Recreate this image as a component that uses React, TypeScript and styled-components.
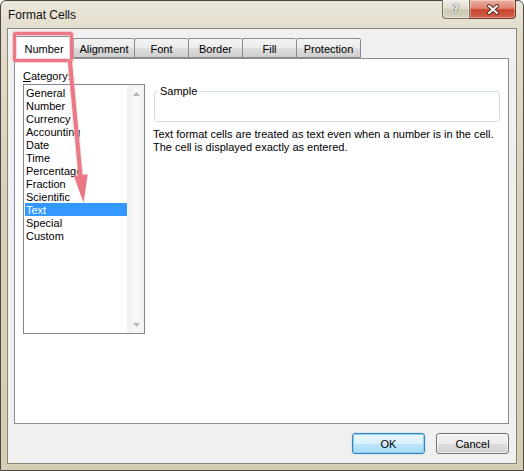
import React from 'react';
import styled, { createGlobalStyle } from 'styled-components';

const GlobalStyle = createGlobalStyle`
  html, body {
    margin: 0;
    padding: 0;
    background: #ffffff;
  }
  body {
    font-family: "Liberation Sans", Arial, sans-serif;
    font-size: 11px;
    color: #000;
  }
  * { box-sizing: border-box; }
`;

const Window = styled.div`
  position: relative;
  width: 524px;
  height: 471px;
  border: 1px solid #4a4840;
  border-radius: 6px 6px 0 0;
  background: linear-gradient(180deg, #ebe7da 0px, #e2dccb 30px, #d9d1bb 200px, #d6cdb5 100%);
  padding: 0 6px 6px 6px;
  display: flex;
  flex-direction: column;
`;

const TitleBar = styled.div`
  height: 27px;
  display: flex;
  align-items: flex-start;
  padding-left: 1px;
`;

const Title = styled.div`
  font-size: 12px;
  line-height: 28px;
  color: #111;
`;

const CaptionButtons = styled.div`
  margin-left: auto;
  margin-right: 1px;
  display: flex;
`;

const CaptionButton = styled.div<{ $close?: boolean }>`
  height: 19px;
  width: ${({ $close }) => ($close ? '46px' : '28px')};
  margin-top: -1px;
  display: flex;
  align-items: center;
  justify-content: center;
  border: 1px solid ${({ $close }) => ($close ? '#6b3a2f' : '#77725f')};
  border-top: none;
  border-left: ${({ $close }) => ($close ? 'none' : '1px solid #77725f')};
  border-radius: ${({ $close }) => ($close ? '0 0 4px 0' : '0 0 0 4px')};
  background: ${({ $close }) =>
    $close
      ? 'linear-gradient(180deg, #eab1a2 0%, #de8672 45%, #c9452e 55%, #d2624a 100%)'
      : 'linear-gradient(180deg, #f1eee6 0%, #e1dccf 45%, #cfc8b5 55%, #d8d2c2 100%)'};
  box-shadow: inset 0 0 0 1px rgba(255, 255, 255, 0.35);
`;

const HelpGlyph = styled.span`
  font-family: "DejaVu Sans", sans-serif;
  font-weight: bold;
  font-size: 12px;
  color: #f4f4f4;
  text-shadow: 0 0 1px #5a5a5a, 0 0 1px #5a5a5a, 0 0 1px #5a5a5a;
  line-height: 1;
`;

const Client = styled.div`
  flex: 1;
  background: #f0f0f0;
  border: 1px solid #8c8677;
  padding: 7px 7px 0 6px;
  display: flex;
  flex-direction: column;
`;

const TabRow = styled.div`
  height: 23px;
  margin-bottom: -1px;
  padding-left: 3px;
  display: flex;
  align-items: flex-end;
  position: relative;
  z-index: 1;
`;

const Tab = styled.div<{ $active?: boolean; $w: number; $last?: boolean }>`
  width: ${({ $w, $active }) => ($active ? $w + 2 : $w)}px;
  height: ${({ $active }) => ($active ? '23px' : '20px')};
  margin-bottom: ${({ $active }) => ($active ? '0' : '1px')};
  margin-left: ${({ $active }) => ($active ? '-2px' : '0')};
  border: 1px solid #898c95;
  border-right: ${({ $last, $active }) => ($last || $active ? '1px solid #898c95' : 'none')};
  border-bottom: ${({ $active }) => ($active ? 'none' : '1px solid #898c95')};
  border-radius: 2px 2px 0 0;
  background: ${({ $active }) =>
    $active ? '#ffffff' : 'linear-gradient(180deg, #f3f3f3 0%, #ebebeb 50%, #dddddd 51%, #cfcfcf 100%)'};
  display: flex;
  align-items: center;
  justify-content: center;
  padding-top: ${({ $active }) => ($active ? '2px' : '1px')};
  font-size: 11px;
  position: relative;
  z-index: ${({ $active }) => ($active ? 2 : 1)};
`;

const Panel = styled.div`
  height: 366px;
  background: #ffffff;
  border: 1px solid #898c95;
  padding: 10px 8px;
  display: flex;
  gap: 9px;
`;

const LeftColumn = styled.div`
  width: 122px;
  display: flex;
  flex-direction: column;
`;

const Label = styled.div`
  height: 13px;
  line-height: 14px;
  margin-bottom: 2px;
  u { text-decoration: underline; }
`;

const ListBox = styled.div`
  height: 250px;
  border: 1px solid #828790;
  display: flex;
  background: #ffffff;
`;

const ListItems = styled.div`
  flex: 1;
  padding: 1px 0 0 1px;
`;

const ListItem = styled.div<{ $selected?: boolean }>`
  height: 13px;
  line-height: 14px;
  padding-left: 1px;
  white-space: nowrap;
  overflow: hidden;
  background: ${({ $selected }) => ($selected ? '#3399ff' : 'transparent')};
  color: ${({ $selected }) => ($selected ? '#ffffff' : '#000000')};
`;

const ScrollBar = styled.div`
  width: 17px;
  display: flex;
  flex-direction: column;
  justify-content: space-between;
  background: linear-gradient(90deg, #f1f1f1, #f8f8f8 50%, #f1f1f1);
  border-left: 1px solid #f0f0f0;
`;

const ScrollArrow = styled.div`
  height: 17px;
  display: flex;
  align-items: center;
  justify-content: center;
`;

const RightColumn = styled.div`
  flex: 1;
  padding-top: 15px;
  display: flex;
  flex-direction: column;
`;

const SampleBox = styled.fieldset`
  margin: 0;
  padding: 0;
  height: 38px;
  border: 1px solid #d5dfe5;
  border-radius: 3px;
  min-width: 0;
`;

const SampleLegend = styled.legend`
  padding: 0 2px;
  margin-left: 3px;
  line-height: 14px;
  font-size: 11px;
`;

const Description = styled.p`
  margin: 6px 0 0 -1px;
  line-height: 13px;
`;

const Footer = styled.div`
  display: flex;
  justify-content: flex-end;
  gap: 11px;
  padding: 9px 0 9px;
`;

const Button = styled.button<{ $default?: boolean }>`
  width: 73px;
  height: 21px;
  font-family: "Liberation Sans", Arial, sans-serif;
  font-size: 11px;
  color: #000;
  border-radius: 3px;
  border: 1px solid ${({ $default }) => ($default ? '#3c7fb1' : '#707070')};
  background: ${({ $default }) =>
    $default
      ? 'linear-gradient(180deg, #eaf6fd 0%, #d9f0fc 50%, #bee6fd 51%, #a7d9f5 100%)'
      : 'linear-gradient(180deg, #f2f2f2 0%, #ebebeb 50%, #dddddd 51%, #cfcfcf 100%)'};
  box-shadow: ${({ $default }) =>
    $default ? 'inset 0 0 0 1px #8ed3f7, 0 0 2px #9fcbe8' : 'inset 0 0 0 1px rgba(255,255,255,0.7)'};
  padding: 0;
`;

const Annotation = styled.svg`
  position: absolute;
  top: -1px;
  left: -1px;
  pointer-events: none;
  z-index: 5;
`;

const tabs = [
  { label: 'Number', w: 56 },
  { label: 'Alignment', w: 61 },
  { label: 'Font', w: 54 },
  { label: 'Border', w: 54 },
  { label: 'Fill', w: 54 },
  { label: 'Protection', w: 65 },
];

const categories = [
  'General',
  'Number',
  'Currency',
  'Accounting',
  'Date',
  'Time',
  'Percentage',
  'Fraction',
  'Scientific',
  'Text',
  'Special',
  'Custom',
];

function Arrow({ up }: { up?: boolean }) {
  return (
    <svg width="7" height="4" viewBox="0 0 7 4">
      <path d={up ? 'M0 4 L3.5 0 L7 4 Z' : 'M0 0 L3.5 4 L7 0 Z'} fill="#b4b4b4" />
    </svg>
  );
}

export default function App() {
  return (
    <>
      <GlobalStyle />
      <Window>
        <TitleBar>
          <Title>Format Cells</Title>
          <CaptionButtons>
            <CaptionButton>
              <HelpGlyph>?</HelpGlyph>
            </CaptionButton>
            <CaptionButton $close>
              <svg width="14" height="11" viewBox="0 0 14 11">
                <path d="M3 2 L11 9 M11 2 L3 9" stroke="#5a2a22" strokeWidth="4" strokeLinecap="round" />
                <path d="M3 2 L11 9 M11 2 L3 9" stroke="#ffffff" strokeWidth="2" strokeLinecap="round" />
              </svg>
            </CaptionButton>
          </CaptionButtons>
        </TitleBar>
        <Client>
          <TabRow>
            {tabs.map((t, i) => (
              <Tab key={t.label} $w={t.w} $active={i === 0} $last={i === tabs.length - 1}>
                {t.label}
              </Tab>
            ))}
          </TabRow>
          <Panel>
            <LeftColumn>
              <Label>
                <u>C</u>ategory:
              </Label>
              <ListBox>
                <ListItems>
                  {categories.map((c) => (
                    <ListItem key={c} $selected={c === 'Text'}>
                      {c}
                    </ListItem>
                  ))}
                </ListItems>
                <ScrollBar>
                  <ScrollArrow>
                    <Arrow up />
                  </ScrollArrow>
                  <ScrollArrow>
                    <Arrow />
                  </ScrollArrow>
                </ScrollBar>
              </ListBox>
            </LeftColumn>
            <RightColumn>
              <SampleBox>
                <SampleLegend>Sample</SampleLegend>
              </SampleBox>
              <Description>
                Text format cells are treated as text even when a number is in the cell.
                <br />
                The cell is displayed exactly as entered.
              </Description>
            </RightColumn>
          </Panel>
          <Footer>
            <Button $default>OK</Button>
            <Button>Cancel</Button>
          </Footer>
        </Client>
        <Annotation width="524" height="471" viewBox="0 0 524 471">
          <rect x="14.5" y="33.5" width="57" height="27" rx="1" fill="none" stroke="#f3a8b1" strokeWidth="5" opacity="0.5" />
          <rect x="14.5" y="33.5" width="57" height="27" rx="1" fill="none" stroke="#ec7886" strokeWidth="3" />
          <line x1="70" y1="62" x2="80.5" y2="176" stroke="#d8c8c8" strokeWidth="6" strokeLinecap="round" opacity="0.5" />
          <line x1="70" y1="62" x2="80.5" y2="176" stroke="#ec7886" strokeWidth="4" strokeLinecap="round" />
          <polygon points="73.7,175.7 87.7,174.3 83.6,203" fill="#ec7886" />
        </Annotation>
      </Window>
    </>
  );
}
